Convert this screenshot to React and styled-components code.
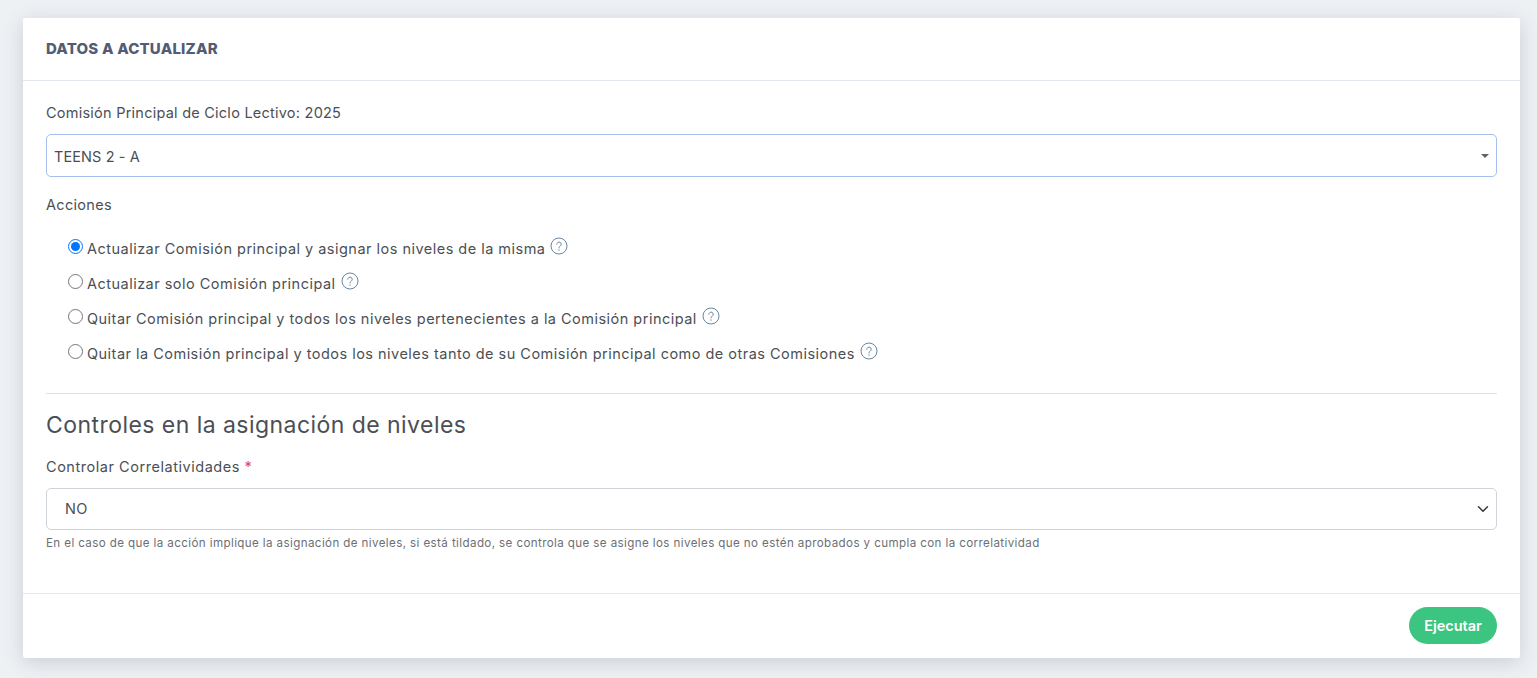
import React from "react";
import styled, { createGlobalStyle } from "styled-components";

const GlobalStyle = createGlobalStyle`
  html, body {
    margin: 0;
    height: 100%;
    overflow: hidden;
    background: #eef1f4;
  }
  body {
    font-family: "Inter", "Liberation Sans", sans-serif;
    font-size: 14.5px;
    color: #4b4f55;
  }
`;

const Page = styled.div`
  padding: 18px 17px 20px 23px;
`;

const Card = styled.div`
  background: #fff;
  border-radius: 2px;
  box-shadow: 0 4px 20px rgba(60, 72, 88, 0.2);
`;

const CardHeader = styled.div`
  height: 60px;
  padding: 0 23px 2px;
  display: flex;
  align-items: center;
  border-bottom: 1px solid #e3e7ef;
`;

const Title = styled.h2`
  margin: 0;
  font-size: 15px;
  font-weight: 800;
  letter-spacing: 0.19px;
  color: #525c75;
`;

const CardBody = styled.div`
  padding: 22px 23px 0;
  height: 513px;
  box-sizing: border-box;
  border-bottom: 1px solid #e3e7ef;
`;

const Label = styled.div`
  line-height: 20px;
  margin-bottom: 11px;
  letter-spacing: ${(props) => props.$tracking || 0}px;
`;

const FakeSelect = styled.div`
  height: 43px;
  box-sizing: border-box;
  border: 1px solid #a6bdf0;
  border-radius: 5px;
  padding: 1px 7px 0;
  display: flex;
  align-items: center;
  justify-content: space-between;
  letter-spacing: 0.1px;
  margin-bottom: 18px;
`;

const Caret = styled.span`
  width: 0;
  height: 0;
  border-left: 4px solid transparent;
  border-right: 4px solid transparent;
  border-top: 4px solid #5f6368;
`;

const RadioList = styled.div`
  padding: 5px 0 0 22px;
  display: flex;
  flex-direction: column;
`;

const RadioRow = styled.label`
  height: 35px;
  display: flex;
  align-items: center;
  letter-spacing: 0.48px;
`;

const Radio = styled.input`
  width: 15px;
  height: 15px;
  margin: -4px 4px 0 0;
  flex: none;
`;

const HelpIcon = styled.svg`
  width: 18px;
  height: 18px;
  margin: -5px 0 0 5px;
  flex: none;
`;

const Divider = styled.hr`
  border: 0;
  border-top: 1px solid #dfe2e6;
  margin: 22px 0 15px;
`;

const SectionTitle = styled.h3`
  margin: 0 0 16px;
  font-size: 23px;
  line-height: 32px;
  font-weight: 400;
  letter-spacing: 0.45px;
`;

const Required = styled.span`
  color: #e0475b;
`;

const NativeSelect = styled.select`
  display: block;
  width: 100%;
  height: 42px;
  box-sizing: border-box;
  border: 1px solid #ced4da;
  border-radius: 5px;
  padding: 0 18px 2px;
  background: #fff url("data:image/svg+xml,%3csvg xmlns='http://www.w3.org/2000/svg' viewBox='0 0 16 16'%3e%3cpath fill='none' stroke='%23343a40' stroke-linecap='round' stroke-linejoin='round' stroke-width='2' d='m2 5 6 6 6-6'/%3e%3c/svg%3e") no-repeat right 7px center / 12px 12px;
  appearance: none;
  font: inherit;
  letter-spacing: 0.3px;
  color: #4b4f55;
`;

const Hint = styled.div`
  margin-top: 6px;
  font-size: 11.6px;
  line-height: 15px;
  letter-spacing: 0.39px;
  color: #6c6f75;
`;

const CardFooter = styled.div`
  height: 62px;
  padding: 0 23px 2px;
  display: flex;
  align-items: center;
  justify-content: flex-end;
`;

const RunButton = styled.button`
  width: 88px;
  height: 37px;
  border: 0;
  border-radius: 19px;
  background: #3cc580;
  color: #fff;
  font: inherit;
  font-weight: 600;
`;

const Help = () => (
  <HelpIcon viewBox="0 0 18 18" fill="none" stroke="#5a7896" strokeWidth="0.9">
    <circle cx="9" cy="9" r="8" />
    <path d="M6.8 7.2a2.2 2.2 0 1 1 3.4 1.9c-.8.5-1.2.9-1.2 1.9" strokeLinecap="round" />
    <path d="M9 12.8v.6" strokeLinecap="round" />
  </HelpIcon>
);

const actions = [
  "Actualizar Comisión principal y asignar los niveles de la misma",
  "Actualizar solo Comisión principal",
  "Quitar Comisión principal y todos los niveles pertenecientes a la Comisión principal",
  "Quitar la Comisión principal y todos los niveles tanto de su Comisión principal como de otras Comisiones",
];

export default function App() {
  return (
    <Page>
      <GlobalStyle />
      <Card>
        <CardHeader>
          <Title>DATOS A ACTUALIZAR</Title>
        </CardHeader>
        <CardBody>
          <Label $tracking={0.24}>Comisión Principal de Ciclo Lectivo: 2025</Label>
          <FakeSelect>
            TEENS 2 - A
            <Caret />
          </FakeSelect>
          <Label $tracking={0.3}>Acciones</Label>
          <RadioList>
            {actions.map((text, i) => (
              <RadioRow key={text}>
                <Radio type="radio" name="accion" defaultChecked={i === 0} />
                {text}
                <Help />
              </RadioRow>
            ))}
          </RadioList>
          <Divider />
          <SectionTitle>Controles en la asignación de niveles</SectionTitle>
          <Label $tracking={0.54}>
            Controlar Correlatividades <Required>*</Required>
          </Label>
          <NativeSelect defaultValue="NO">
            <option>NO</option>
            <option>SI</option>
          </NativeSelect>
          <Hint>
            En el caso de que la acción implique la asignación de niveles, si está tildado, se controla que se asigne los niveles que no estén aprobados y cumpla con la correlatividad
          </Hint>
        </CardBody>
        <CardFooter>
          <RunButton>Ejecutar</RunButton>
        </CardFooter>
      </Card>
    </Page>
  );
}
